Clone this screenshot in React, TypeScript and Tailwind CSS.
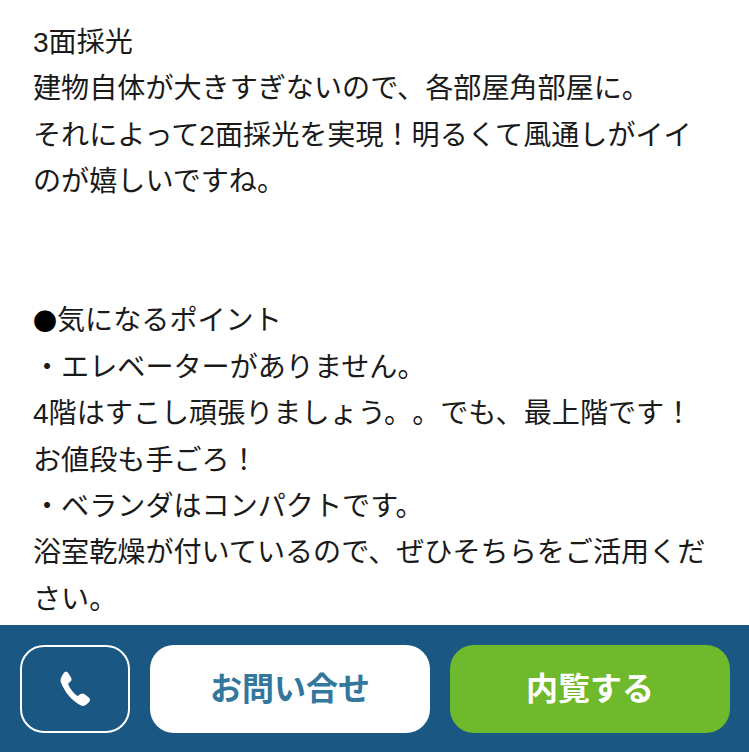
const lines = [
  "3面採光",
  "建物自体が大きすぎないので、各部屋角部屋に。",
  "それによって2面採光を実現！明るくて風通しがイイ",
  "のが嬉しいですね。",
  "",
  "",
  "",
  "・エレベーターがありません。",
  "4階はすこし頑張りましょう。。でも、最上階です！",
  "お値段も手ごろ！",
  "・ベランダはコンパクトです。",
  "浴室乾燥が付いているので、ぜひそちらをご活用くだ",
  "さい。",
];

function PhoneIcon() {
  return (
    <svg width="34" height="36" viewBox="0 0 34 36" fill="#ffffff">
      <path d="M6.5 1.2 C8 .4 9.6 .9 10.4 2.3 L13.2 7 C13.9 8.2 13.6 9.6 12.6 10.5 L10.7 12.1 C10.2 12.6 10.1 13.2 10.4 13.8 C12 17.6 15.2 22 18.7 24.6 C19.2 25 19.9 25 20.4 24.6 L22.6 23 C23.7 22.2 25.1 22.2 26.2 23 L30.8 26.4 C32.1 27.4 32.4 29.1 31.4 30.4 C30.1 32.1 28.6 33.6 26.8 34.5 C25.6 35.1 24.3 35 23 34.4 C13.5 29.6 6.3 20.5 2.9 11.2 C2.4 9.8 2.4 8.4 3 7.2 C3.8 5 5 2.9 6.5 1.2 Z" />
    </svg>
  );
}

export default function App() {
  return (
    <div className="h-[752px] flex flex-col bg-white overflow-hidden font-['Liberation_Sans','Noto_Sans_CJK_JP',sans-serif] [text-spacing-trim:space-all]">
      <div className="flex-1 min-h-0 overflow-hidden pt-[20px] px-[33px] text-[28.1px] leading-[46.4px] text-[#1a1a1a]">
        {lines.map((line, i) => (
          <p key={i} className="h-[46.4px] whitespace-nowrap">
            {i === 6 ? (
              <>
                <span className="font-['Noto_Sans_CJK_JP',sans-serif] text-[24px] leading-none text-black">●</span>
                気になるポイント
              </>
            ) : (
              line
            )}
          </p>
        ))}
      </div>
      <div className="h-[127px] flex-shrink-0 bg-[#1a5883] px-[20px] pt-[20px] flex gap-[20px]">
        <a className="w-[110px] h-[88px] flex-shrink-0 flex items-center justify-center rounded-[24px] border-2 border-white">
          <PhoneIcon />
        </a>
        <a className="w-[280px] h-[88px] flex-shrink-0 flex items-center justify-center rounded-[24px] bg-white text-[32px] font-bold text-[#33779d]">
          お問い合せ
        </a>
        <a className="w-[280px] h-[88px] flex-shrink-0 flex items-center justify-center rounded-[24px] bg-[#6fb92c] text-[32px] font-bold text-white">
          内覧する
        </a>
      </div>
    </div>
  );
}
